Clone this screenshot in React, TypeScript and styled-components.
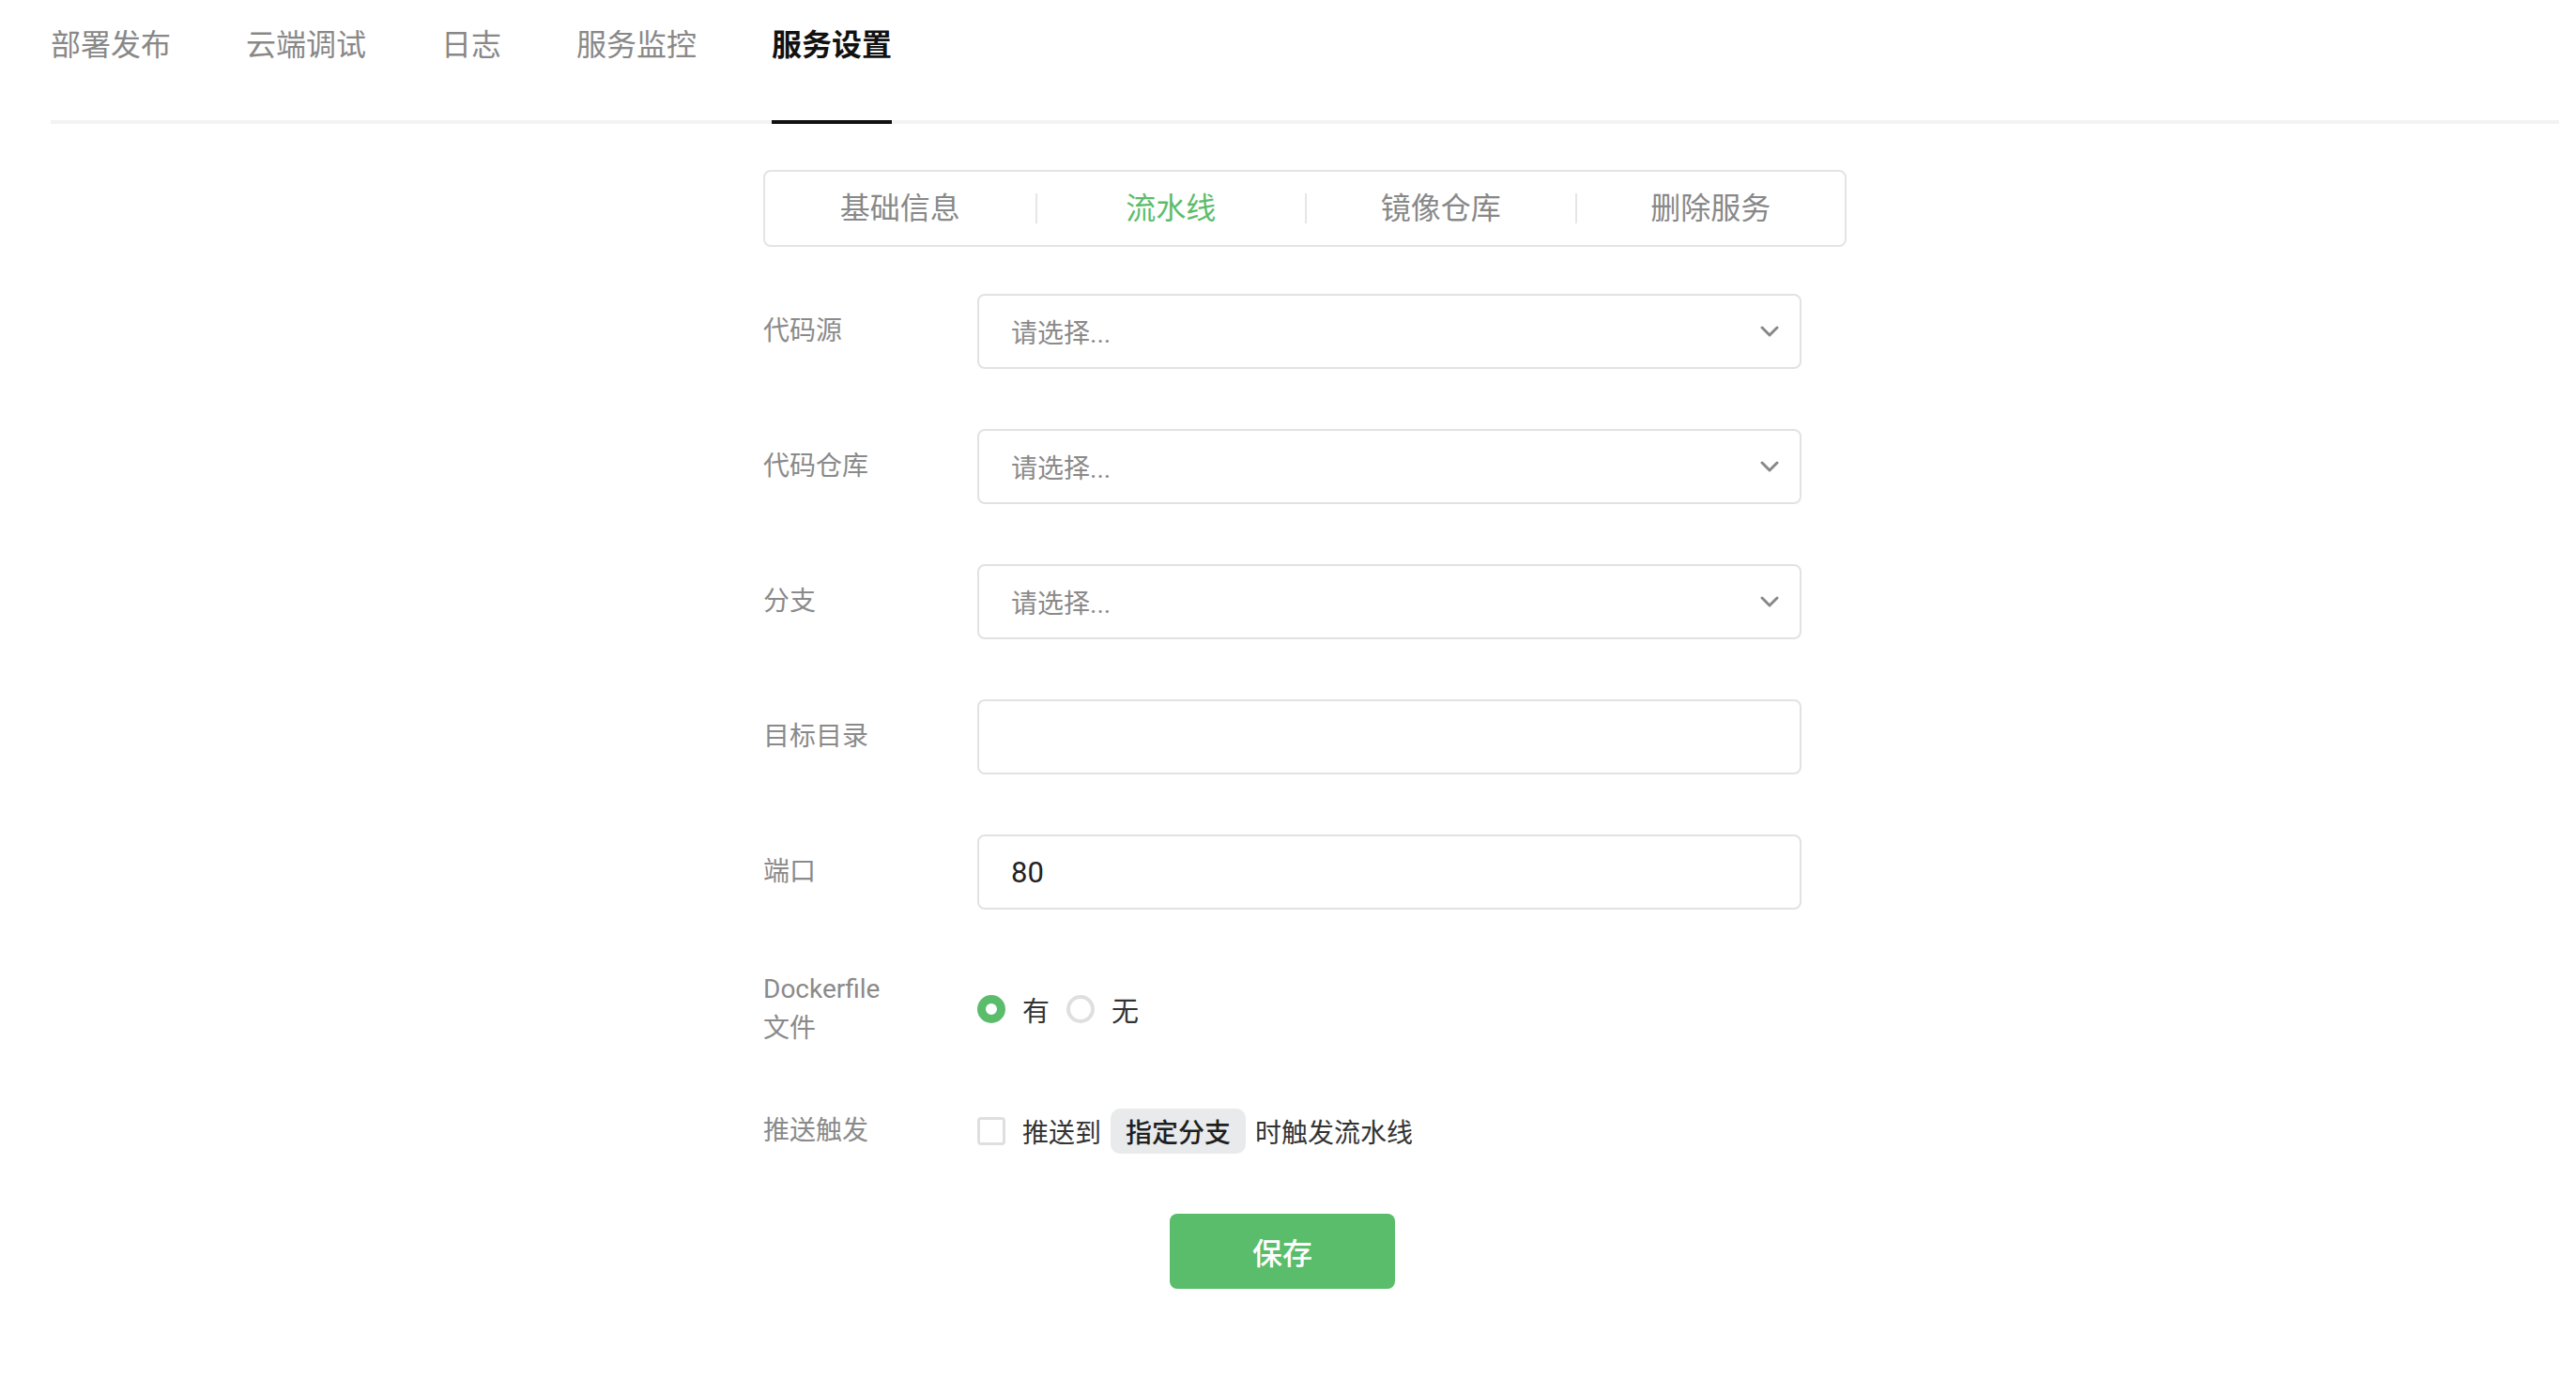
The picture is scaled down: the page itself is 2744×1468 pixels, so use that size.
import React from 'react';
import styled, { createGlobalStyle } from 'styled-components';

const GlobalStyle = createGlobalStyle`
    body {
        margin: 0;
        background: #fff;
        font-family: Roboto, "Noto Sans CJK SC", sans-serif;
    }
    * {
        box-sizing: border-box;
    }
`;

const Page = styled.div`
    padding: 0 18px 0 54px;
    min-height: 1468px;
`;

const TopTabs = styled.div`
    display: flex;
    gap: 80px;
    border-bottom: 4px solid #f2f3f5;
`;

const TopTab = styled.div<{ $active?: boolean }>`
    font-size: 32px;
    line-height: 96px;
    padding-bottom: 32px;
    margin-bottom: -4px;
    border-bottom: 4px solid ${(p) => (p.$active ? '#111' : 'transparent')};
    color: ${(p) => (p.$active ? '#111' : '#888')};
    font-weight: ${(p) => (p.$active ? 700 : 400)};
    cursor: pointer;
`;

const Content = styled.div`
    width: 1154px;
    margin: 49px auto 0;
`;

const SubTabs = styled.div`
    display: grid;
    grid-template-columns: repeat(4, 1fr);
    border: 2px solid #e4e4e4;
    border-radius: 8px;
    height: 82px;
    align-items: center;
`;

const SubTab = styled.div<{ $active?: boolean; $first?: boolean }>`
    text-align: center;
    font-size: 32px;
    line-height: 32px;
    color: ${(p) => (p.$active ? '#5bbd6b' : '#888')};
    border-left: ${(p) => (p.$first ? 'none' : '2px solid #e6e6e6')};
    cursor: pointer;
`;

const Form = styled.div`
    display: flex;
    flex-direction: column;
    gap: 64px;
    margin-top: 50px;
`;

const Row = styled.div`
    display: flex;
    align-items: center;
    min-height: 48px;
`;

const Label = styled.div`
    width: 150px;
    margin-right: 78px;
    font-size: 28px;
    line-height: 42px;
    color: #8a8a8a;
`;

const Field = styled.div`
    width: 878px;
    height: 80px;
    border: 2px solid #e2e2e2;
    border-radius: 8px;
    display: flex;
    align-items: center;
    justify-content: space-between;
    padding: 0 22px 0 34px;
    background: #fff;
`;

const Placeholder = styled.span`
    font-size: 28px;
    color: #8a8a8a;
`;

const Value = styled.span`
    font-size: 31px;
    color: #222;
`;

const Options = styled.div`
    display: flex;
    align-items: center;
    font-size: 28px;
    color: #333;
`;

const Radio = styled.span<{ $checked?: boolean }>`
    width: 30px;
    height: 30px;
    border-radius: 50%;
    border: ${(p) => (p.$checked ? '9px solid #5bbd6b' : '4px solid #dedfe0')};
    background: #fff;
    margin-right: 18px;
`;

const OptionText = styled.span`
    font-size: 29px;
    margin-right: 18px;
`;

const Checkbox = styled.span`
    width: 30px;
    height: 30px;
    border: 3px solid #dedfe0;
    border-radius: 4px;
    margin-right: 18px;
`;

const Tag = styled.span`
    display: inline-flex;
    align-items: center;
    height: 48px;
    padding: 0 16px;
    margin: 0 10px;
    background: #e9eaec;
    border-radius: 10px;
    color: #1f1f1f;
    font-weight: 500;
`;

const Actions = styled.div`
    display: flex;
    justify-content: center;
    padding-right: 48px;
`;

const SaveButton = styled.button`
    width: 240px;
    height: 80px;
    border: none;
    border-radius: 8px;
    background: #59bd6b;
    color: #fff;
    font-family: inherit;
    font-size: 32px;
    font-weight: 500;
    cursor: pointer;
`;

const Chevron = () => (
    <svg width="20" height="12" viewBox="0 0 20 12" fill="none">
        <polyline points="2,2 10,10 18,2" stroke="#888" strokeWidth="3" strokeLinecap="round" strokeLinejoin="round" />
    </svg>
);

const topTabs = ['部署发布', '云端调试', '日志', '服务监控', '服务设置'];
const subTabs = ['基础信息', '流水线', '镜像仓库', '删除服务'];
const selects = ['代码源', '代码仓库', '分支'];

const App: React.FC = () => {
    return (
        <Page>
            <GlobalStyle />
            <TopTabs>
                {topTabs.map((t) => (
                    <TopTab key={t} $active={t === '服务设置'}>{t}</TopTab>
                ))}
            </TopTabs>
            <Content>
                <SubTabs>
                    {subTabs.map((t, i) => (
                        <SubTab key={t} $first={i === 0} $active={t === '流水线'}>{t}</SubTab>
                    ))}
                </SubTabs>
                <Form>
                    {selects.map((s) => (
                        <Row key={s}>
                            <Label>{s}</Label>
                            <Field>
                                <Placeholder>请选择...</Placeholder>
                                <Chevron />
                            </Field>
                        </Row>
                    ))}
                    <Row>
                        <Label>目标目录</Label>
                        <Field />
                    </Row>
                    <Row>
                        <Label>端口</Label>
                        <Field>
                            <Value>80</Value>
                        </Field>
                    </Row>
                    <Row>
                        <Label>Dockerfile 文件</Label>
                        <Options>
                            <Radio $checked />
                            <OptionText>有</OptionText>
                            <Radio />
                            <OptionText>无</OptionText>
                        </Options>
                    </Row>
                    <Row>
                        <Label>推送触发</Label>
                        <Options>
                            <Checkbox />
                            <span>推送到</span>
                            <Tag>指定分支</Tag>
                            <span>时触发流水线</span>
                        </Options>
                    </Row>
                    <Actions>
                        <SaveButton>保存</SaveButton>
                    </Actions>
                </Form>
            </Content>
        </Page>
    );
};

export default App;
